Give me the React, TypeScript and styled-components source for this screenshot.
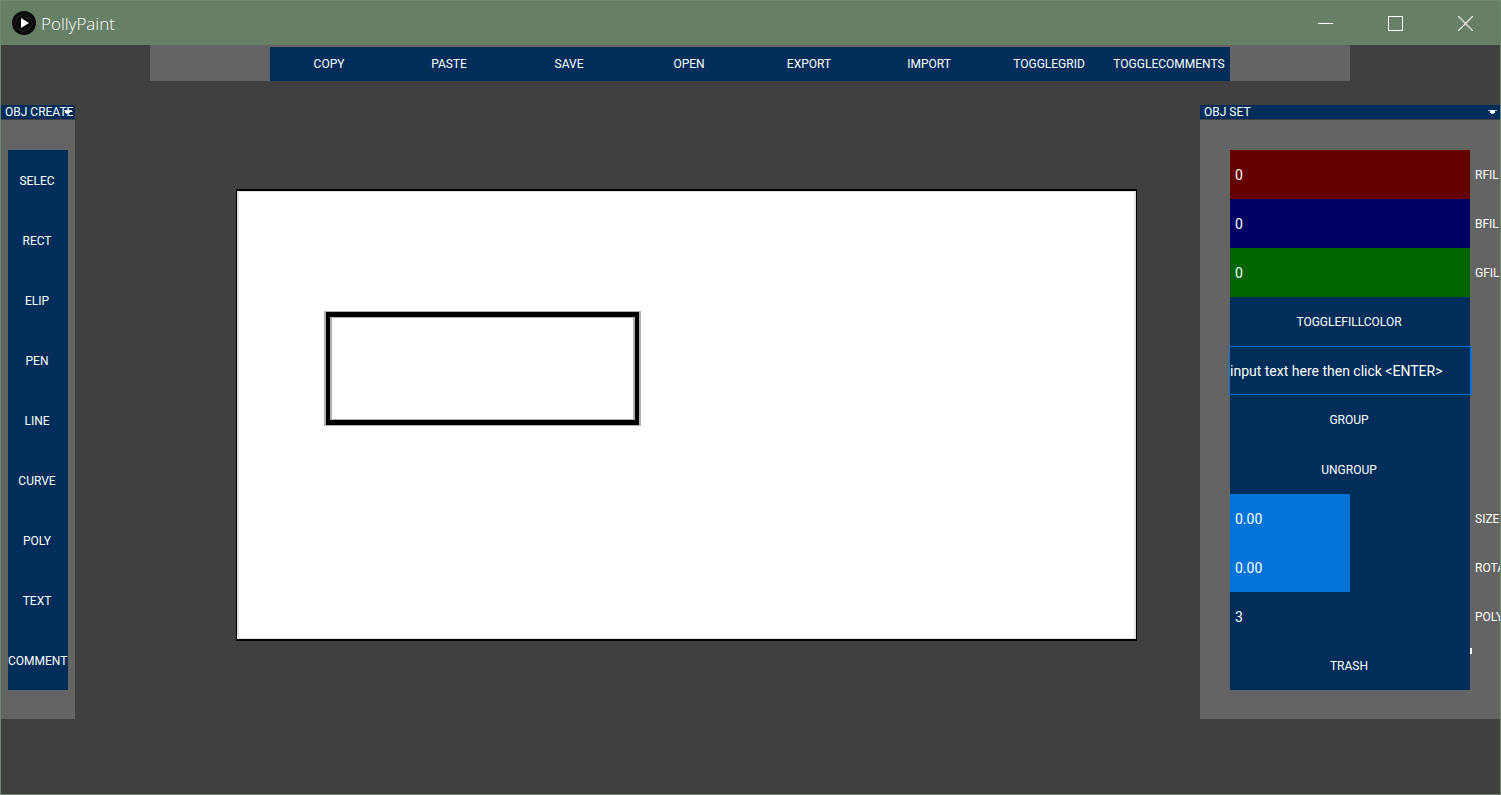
import React, { useState } from 'react';
import styled, { createGlobalStyle } from 'styled-components';

const navy = '#002d5a';
const azure = '#0074d9';

const GlobalStyle = createGlobalStyle`
  * { box-sizing: border-box; }
  body { margin: 0; }
  button, input { font: inherit; color: inherit; }
`;

const Window = styled.div`
  display: flex;
  flex-direction: column;
  min-height: 100vh;
  border: 1px solid #6d8a70;
  background: #404040;
  color: #fff;
  font: 12px/16px 'Roboto', sans-serif;
  overflow: hidden;
`;

const TitleBar = styled.header`
  display: flex;
  align-items: center;
  height: 44px;
  padding-left: 11px;
  background: #667f66;
`;

const Title = styled.h1`
  flex: 1;
  margin: 0 0 0 5px;
  padding-top: 1px;
  font: 300 17px/24px 'Open Sans', sans-serif;
`;

const WindowButton = styled.button`
  display: grid;
  place-items: center;
  width: 70px;
  height: 44px;
  padding: 0;
  border: 0;
  background: none;
`;

const Toolbar = styled.nav`
  display: grid;
  grid-template-columns: repeat(8, 1fr);
  margin: 0 150px 0 149px;
  padding: 2px 120px 0;
  background: #646464;
`;

const Command = styled.button`
  min-width: 0;
  height: 34px;
  padding: 0 2px 0 0;
  border: 0;
  background: ${navy};
  white-space: nowrap;
`;

const Main = styled.main`
  display: grid;
  grid-template-columns: 74px 1fr 300px;
  align-items: start;
  margin-top: 24px;
`;

const Panel = styled.section`
  min-width: 0;
  overflow: hidden;
`;

const PanelHeader = styled.button`
  display: flex;
  align-items: center;
  justify-content: space-between;
  width: 100%;
  height: 14px;
  padding: 0 3px 0 4px;
  border: 0;
  background: ${navy};
  white-space: nowrap;
`;

const PanelTitle = styled.span`
  min-width: 0;
`;

const Arrow = styled.svg`
  flex: none;
  margin-left: -10px;
`;

const ToolList = styled.div`
  display: grid;
  grid-auto-rows: 60px;
  margin-top: 1px;
  padding: 30px 7px 29px;
  background: #646464;
`;

const Tool = styled(Command)`
  height: 100%;
  padding-top: 2px;
`;

const Controls = styled.div`
  display: grid;
  grid-template-rows: repeat(11, 1fr);
  height: 599px;
  margin-top: 1px;
  padding: 30px 0 29px 30px;
  background: #646464;
`;

const Row = styled.div`
  display: grid;
  grid-template-columns: 240px 1fr;
  align-items: stretch;
  min-height: 0;
`;

const SliderRow = styled.label`
  display: grid;
  grid-template-columns: 240px 1fr;
  align-items: center;
  min-height: 0;
`;

const Slider = styled.input<{ $track: string; $fill: number }>`
  grid-area: 1 / 1;
  appearance: none;
  align-self: stretch;
  width: 100%;
  height: 100%;
  margin: 0;
  background: linear-gradient(to right, ${azure} ${p => p.$fill}%, ${p => p.$track} ${p => p.$fill}%);
  &::-webkit-slider-thumb { appearance: none; width: 1px; height: 1px; }
`;

const Value = styled.output`
  grid-area: 1 / 1;
  z-index: 1;
  padding: 1px 0 0 5px;
  font-size: 14px;
  pointer-events: none;
`;

const SliderName = styled.span`
  grid-area: 1 / 2;
  min-width: 0;
  padding: 1px 0 0 5px;
  overflow: hidden;
  white-space: nowrap;
`;

const Action = styled(Command)`
  height: 100%;
  padding-top: 1px;
`;

const TextEntry = styled.input`
  height: 100%;
  width: 243px;
  margin-left: -1px;
  padding: 1px 0 0;
  border: 1px solid ${azure};
  border-right-width: 2px;
  border-radius: 0;
  background: ${navy};
  outline: 0;
  font-size: 14px;
`;

const Tick = styled.span`
  width: 2px;
  height: 6px;
  margin-top: 7px;
  background: #fff;
`;

const Workspace = styled.div`
  padding: 84px 63px 0 161px;
`;

const Canvas = styled.svg`
  display: block;
  width: 100%;
  height: auto;
`;

const commands = ['COPY', 'PASTE', 'SAVE', 'OPEN', 'EXPORT', 'IMPORT', 'TOGGLEGRID', 'TOGGLECOMMENTS'];
const tools = ['SELEC', 'RECT', 'ELIP', 'PEN', 'LINE', 'CURVE', 'POLY', 'TEXT', 'COMMENT'];

type ChannelProps = { name: string; track?: string; min?: number; max: number; start?: number; digits?: number };

function Channel({ name, track = navy, min = 0, max, start = 0, digits = 0 }: ChannelProps) {
  const [value, setValue] = useState(start);
  return (
    <SliderRow>
      <Slider
        type="range"
        min={min}
        max={max}
        step={digits ? 0.01 : 1}
        value={value}
        $track={track}
        $fill={((value - min) / (max - min)) * 100}
        onChange={e => setValue(Number(e.target.value))}
      />
      <Value>{value.toFixed(digits)}</Value>
      <SliderName>{name}</SliderName>
    </SliderRow>
  );
}

function DownArrow() {
  return (
    <Arrow width="9" height="5" viewBox="0 0 9 5" aria-hidden="true">
      <path d="M0 0h9v1H0z" fill="#b3c0ce" />
      <path d="M2 0h5v3H2z" fill="#fff" />
      <path d="M3 3h3v1H3z" fill="#b3c0ce" />
    </Arrow>
  );
}

export default function App() {
  const [text, setText] = useState('input text here then click <ENTER>');
  return (
    <Window>
      <GlobalStyle />
      <TitleBar>
        <svg width="24" height="24" viewBox="0 0 24 24" aria-hidden="true">
          <circle cx="12" cy="12" r="12" fill="#080808" />
          <path d="M3 8l8-5 7 3 3 8-6 6-8-1-4-6 3-8 12 3M4 16l7 5 9-7" fill="none" stroke="#2c2c2c" strokeWidth=".6" />
          <path d="M9 7l8 5-8 5z" fill="#fff" />
        </svg>
        <Title>PollyPaint</Title>
        <WindowButton aria-label="Minimize">
          <svg width="15" height="15" viewBox="0 0 15 15"><path d="M0 7.5h15" stroke="#fff" /></svg>
        </WindowButton>
        <WindowButton aria-label="Maximize">
          <svg width="15" height="15" viewBox="0 0 15 15"><path d="M.5.5h14v14H.5z" fill="none" stroke="#fff" /></svg>
        </WindowButton>
        <WindowButton aria-label="Close">
          <svg width="15" height="15" viewBox="0 0 15 15"><path d="M0 0l15 15M15 0L0 15" stroke="#fff" strokeWidth="1.2" /></svg>
        </WindowButton>
      </TitleBar>
      <Toolbar>
        {commands.map(c => <Command key={c}>{c}</Command>)}
      </Toolbar>
      <Main>
        <Panel>
          <PanelHeader><PanelTitle>OBJ CREATE</PanelTitle><DownArrow /></PanelHeader>
          <ToolList>
            {tools.map(t => <Tool key={t}>{t}</Tool>)}
          </ToolList>
        </Panel>
        <Workspace>
          <Canvas viewBox="0 0 901 452" role="img" aria-label="Drawing">
            <path d="M0 0h901v452H0z" fill="#000" />
            <path d="M1 2h899v448H1z" fill="#e0e0e0" />
            <path d="M3 3h895v446H3z" fill="#fff" />
            <path d="M88 122h317v115H88z" fill="#b0b0b0" />
            <path d="M90 123h313v113H90z" fill="#000" />
            <path d="M94 128h305v103H94z" fill="#b0b0b0" />
            <path d="M96 129h301v101H96z" fill="#fff" />
          </Canvas>
        </Workspace>
        <Panel>
          <PanelHeader><PanelTitle>OBJ SET</PanelTitle><DownArrow /></PanelHeader>
          <Controls>
            <Channel name="RFIL" track="#640000" max={255} />
            <Channel name="BFIL" track="#000064" max={255} />
            <Channel name="GFIL" track="#006400" max={255} />
            <Row><Action>TOGGLEFILLCOLOR</Action></Row>
            <Row><TextEntry aria-label="Text" value={text} onChange={e => setText(e.target.value)} /></Row>
            <Row><Action>GROUP</Action></Row>
            <Row><Action>UNGROUP</Action></Row>
            <Channel name="SIZE" min={-1} max={1} digits={2} />
            <Channel name="ROTA" min={-1} max={1} digits={2} />
            <Channel name="POLY" min={3} max={20} start={3} />
            <Row><Action>TRASH</Action><Tick /></Row>
          </Controls>
        </Panel>
      </Main>
    </Window>
  );
}
